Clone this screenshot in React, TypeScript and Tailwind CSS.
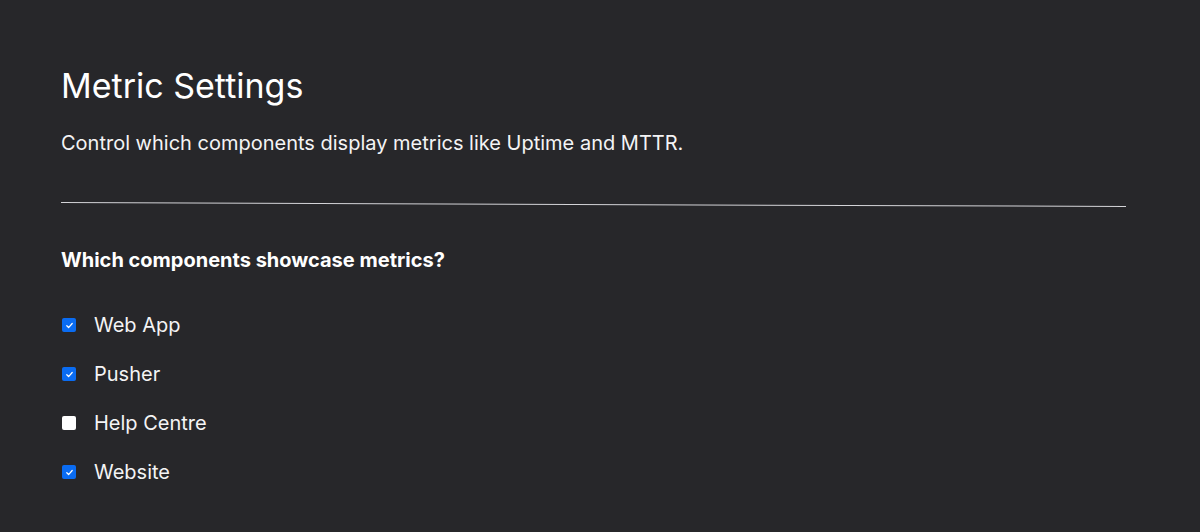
import { useState } from 'react';

const ITEMS = [
  { key: 'webapp', label: 'Web App', checked: true },
  { key: 'pusher', label: 'Pusher', checked: true },
  { key: 'help', label: 'Help Centre', checked: false },
  { key: 'website', label: 'Website', checked: true },
];

export default function App() {
  const [items, setItems] = useState(ITEMS);

  function toggle(key: string) {
    setItems(prev => prev.map(i => (i.key === key ? { ...i, checked: !i.checked } : i)));
  }

  return (
    <div className="min-h-[532px] w-full bg-[#27272a] text-white font-['Inter',sans-serif]">
      <div className="px-[61px] pt-[66px]">
        <h1 className="text-[34px] leading-[40px] font-normal">Metric Settings</h1>
        <p className="mt-[23px] text-[20px] leading-[28px] text-[#f4f4f5]">Control which components display metrics like Uptime and MTTR.</p>

        <div className="mt-[47px] mr-[13px] h-px bg-[#d4d4d8] rotate-[0.215deg]" />

        <h2 className="mt-[41px] text-[20px] leading-[28px] font-bold">Which components showcase metrics?</h2>

        {/* checkbox list */}
        <div className="mt-[37px] flex flex-col gap-[21px]">
          {items.map(i => (
            <label key={i.key} className="flex items-center gap-[18px] cursor-pointer h-[28px]">
              <button
                type="button"
                onClick={() => toggle(i.key)}
                className={`ml-[1px] w-[14px] h-[14px] rounded-[2px] flex items-center justify-center ${i.checked ? 'bg-[#0a6cf2]' : 'bg-white'}`}
              >
                {i.checked && (
                  <svg width="9" height="9" viewBox="0 0 10 10" fill="none" stroke="white" strokeWidth="1.4" strokeLinecap="round" strokeLinejoin="round">
                    <path d="M2 5.3l2 2L8 2.8" />
                  </svg>
                )}
              </button>
              <span className="text-[20px] leading-[28px] text-[#f4f4f5]">{i.label}</span>
            </label>
          ))}
        </div>
      </div>
    </div>
  );
}
